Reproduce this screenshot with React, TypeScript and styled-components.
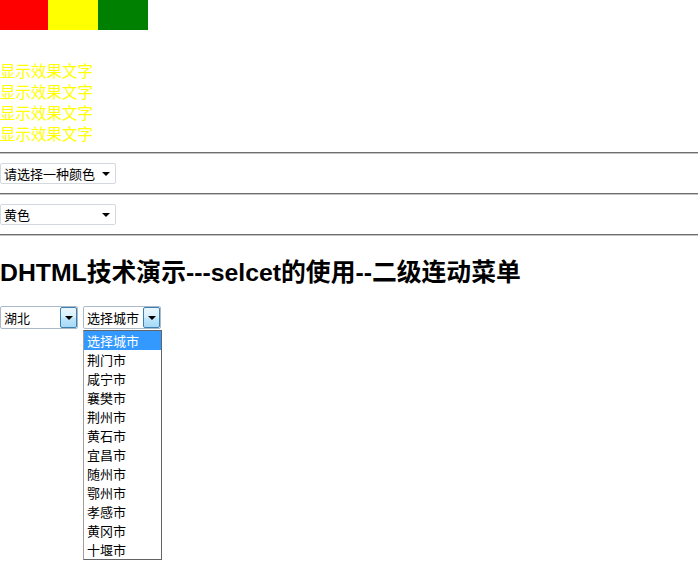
import React from "react";
import styled, { createGlobalStyle } from "styled-components";

const Global = createGlobalStyle`
  html, body { margin: 0; padding: 0; background: #fff; }
  body { font-family: "Noto Sans CJK SC", "Noto Sans", sans-serif; color: #000; }
`;

const Page = styled.div`
  width: 698px;
  height: 563px;
  overflow: hidden;
  position: relative;
`;

const ColorBar = styled.div`
  display: flex;
  height: 30px;
`;

const Swatch = styled.div<{ $c: string; $w: number }>`
  width: ${(p) => p.$w}px;
  height: 30px;
  background: ${(p) => p.$c};
`;

const TextBlock = styled.div`
  margin-top: 30px;
  display: flex;
  flex-direction: column;
`;

const YellowLine = styled.div`
  color: #ffff00;
  font-size: 15.5px;
  line-height: 21px;
  height: 21px;
  white-space: nowrap;
`;

const Rule = styled.div<{ $mt?: number }>`
  margin-top: ${(p) => p.$mt ?? 0}px;
  height: 1px;
  background: #6e6e6e;
  border-bottom: 1px solid #c4c4c4;
`;

const SelectRow = styled.div`
  padding: 9px 0;
  display: flex;
`;

const PlainSelect = styled.div`
  box-sizing: border-box;
  width: 116px;
  height: 21px;
  border: 1px solid #d4d9e0;
  border-radius: 2px;
  background: #fff;
  display: flex;
  align-items: center;
  justify-content: space-between;
  padding: 0 5px 0 3px;
  font-size: 13px;
  line-height: 19px;
  white-space: nowrap;
`;

const SmallArrow = styled.span`
  width: 0;
  height: 0;
  border-left: 4px solid transparent;
  border-right: 4px solid transparent;
  border-top: 4px solid #000;
`;

const Heading = styled.h1`
  margin: 19px 0 0;
  font-family: "Liberation Sans", "Noto Sans CJK SC", sans-serif;
  font-size: 24.8px;
  font-weight: bold;
  line-height: 36px;
  white-space: nowrap;
`;

const CascadeRow = styled.div`
  margin-top: 15px;
  display: flex;
  gap: 5px;
  align-items: flex-start;
`;

const ComboWrap = styled.div`
  position: relative;
`;

const Combo = styled.div<{ $w: number }>`
  box-sizing: border-box;
  width: ${(p) => p.$w}px;
  height: 23px;
  border: 1px solid #abb9c9;
  border-radius: 2px;
  background: #fff;
  display: flex;
  align-items: stretch;
  font-size: 13px;
`;

const ComboText = styled.div`
  flex: 1;
  padding-left: 3px;
  line-height: 21px;
  white-space: nowrap;
  overflow: hidden;
`;

const ComboButton = styled.div`
  box-sizing: border-box;
  width: 17px;
  border: 1px solid #3c7fb1;
  border-radius: 2px;
  background: linear-gradient(#eaf6fd, #d9f0fc 45%, #bee6fd 55%, #a7d9f5);
  display: flex;
  align-items: center;
  justify-content: center;
`;

const DropList = styled.div`
  position: absolute;
  left: 0;
  top: 24px;
  box-sizing: border-box;
  width: 79px;
  border: 1px solid #646464;
  border-left-color: #a0a0a0;
  background: #fff;
  z-index: 5;
`;

const DropItem = styled.div<{ $active?: boolean }>`
  height: 19px;
  line-height: 19px;
  padding-left: 3px;
  font-size: 13px;
  white-space: nowrap;
  background: ${(p) => (p.$active ? "#3399ff" : "#fff")};
  color: ${(p) => (p.$active ? "#fff" : "#000")};
`;

const cities = [
  "选择城市",
  "荆门市",
  "咸宁市",
  "襄樊市",
  "荆州市",
  "黄石市",
  "宜昌市",
  "随州市",
  "鄂州市",
  "孝感市",
  "黄冈市",
  "十堰市",
];

export default function App() {
  return (
    <Page>
      <Global />
      <ColorBar>
        <Swatch $c="#ff0000" $w={48} />
        <Swatch $c="#ffff00" $w={50} />
        <Swatch $c="#008000" $w={50} />
      </ColorBar>
      <TextBlock>
        {[0, 1, 2, 3].map((i) => (
          <YellowLine key={i}>显示效果文字</YellowLine>
        ))}
      </TextBlock>
      <Rule $mt={8} />
      <SelectRow>
        <PlainSelect>
          <span>请选择一种颜色</span>
          <SmallArrow />
        </PlainSelect>
      </SelectRow>
      <Rule />
      <SelectRow>
        <PlainSelect>
          <span>黄色</span>
          <SmallArrow />
        </PlainSelect>
      </SelectRow>
      <Rule />
      <Heading>DHTML技术演示---selcet的使用--二级连动菜单</Heading>
      <CascadeRow>
        <Combo $w={78}>
          <ComboText>湖北</ComboText>
          <ComboButton>
            <SmallArrow />
          </ComboButton>
        </Combo>
        <ComboWrap>
          <Combo $w={78}>
            <ComboText>选择城市</ComboText>
            <ComboButton>
              <SmallArrow />
            </ComboButton>
          </Combo>
          <DropList>
            {cities.map((c, i) => (
              <DropItem key={c} $active={i === 0}>
                {c}
              </DropItem>
            ))}
          </DropList>
        </ComboWrap>
      </CascadeRow>
    </Page>
  );
}
